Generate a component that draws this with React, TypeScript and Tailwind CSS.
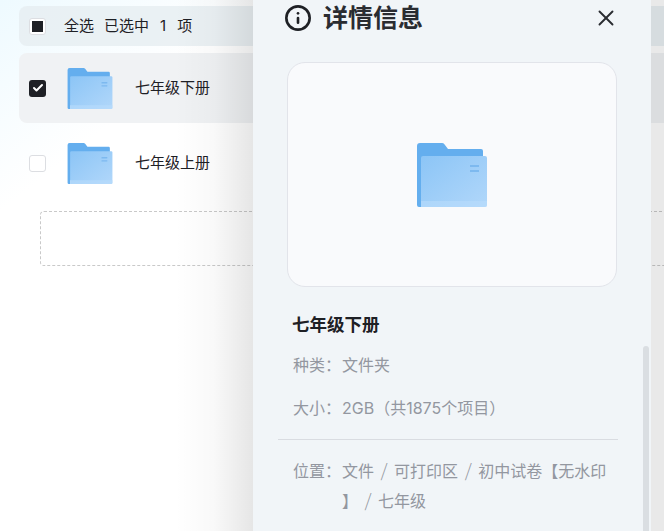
import { Check, Info, X } from 'lucide-react';

const cjk = "font-['Inter','Noto_Sans_CJK_SC',sans-serif]";

function FolderIcon({ className }: { className?: string }) {
  return (
    <svg viewBox="0 0 70 64" className={className}>
      <defs>
        <linearGradient id="folderFront" x1="0" y1="0" x2="1" y2="1">
          <stop offset="0" stopColor="#8cc5f6" />
          <stop offset="1" stopColor="#b1d7fa" />
        </linearGradient>
      </defs>
      <path d="M0 3a3 3 0 0 1 3-3h22a3 3 0 0 1 2.4 1.2L31 6h33a2 2 0 0 1 2 2v50H4v6H2a2 2 0 0 1-2-2z" fill="#64aeee" />
      <path d="M4 15a2 2 0 0 1 2-2h62a2 2 0 0 1 2 2v47a2 2 0 0 1-2 2H4z" fill="url(#folderFront)" />
      <path d="M4 58h66v4a2 2 0 0 1-2 2H4z" fill="#b9dcfb" opacity="0.6" />
      <path d="M53 22h9v2h-9zM53 27h9v2h-9z" fill="#7db9ef" />
    </svg>
  );
}

function FileRow({ name, selected }: { name: string; selected?: boolean }) {
  return (
    <div className={`flex h-[70px] items-center rounded-lg pl-[10px] ${selected ? 'bg-[#f0f2f4]' : ''}`}>
      {selected ? (
        <span className="flex h-[17px] w-[17px] items-center justify-center rounded-[3px] bg-[#1e2025]">
          <Check className="h-3 w-3 text-white" strokeWidth={4} />
        </span>
      ) : (
        <span className="h-[17px] w-[17px] rounded-[3px] border border-[#dcdee2] bg-white" />
      )}
      <FolderIcon className="ml-[21px] mt-px h-[41px] w-[46px]" />
      <span className="ml-[22px] text-[15px] text-[#1e2025]">{name}</span>
    </div>
  );
}

function MetaRow({ label, children }: { label: string; children: React.ReactNode }) {
  return (
    <div className="flex text-base leading-[30px] text-[#9397a0]">
      <span className="w-[49px] shrink-0">{label}</span>
      <span className="min-w-0 flex-1 whitespace-nowrap">{children}</span>
    </div>
  );
}

function Sep() {
  return <span className="mx-[6.5px] font-['Noto_Sans_CJK_SC',sans-serif] text-lg leading-none font-light">/</span>;
}

export default function App() {
  return (
    <div className={`relative h-[531px] w-[664px] overflow-hidden bg-gradient-to-br from-[#eefaff] via-white via-[20%] to-white ${cjk}`}>
      {/* file list behind the drawer */}
      <div className="-mr-10 flex flex-col pl-[19px]">
        <div className="mt-[6px] flex h-10 items-center rounded-lg bg-[#e6edf1]/80 pl-[10px] text-[15px] text-[#1e2025]">
          <span className="flex h-[17px] w-[17px] items-center justify-center rounded-[3px] border border-[#dcdee2] bg-white">
            <span className="h-[11px] w-[11px] bg-[#1e2025]" />
          </span>
          <span className="ml-[18px]">全选</span>
          <span className="ml-[10px]">已选中</span>
          <span className="ml-[11px]">1</span>
          <span className="ml-[11px]">项</span>
        </div>
        <div className="mt-[7px]">
          <FileRow name="七年级下册" selected />
        </div>
        <div className="mt-[5px]">
          <FileRow name="七年级上册" />
        </div>
        <div className="ml-[21px] mt-[13px] h-[55px] rounded border border-dashed border-[#c9c9c9]" />
      </div>

      {/* drawer shadow */}
      <div className="pointer-events-none absolute inset-y-0 left-[175px] w-[78px] bg-gradient-to-r from-transparent via-black/[.025] to-black/10" />
      <div className="pointer-events-none absolute inset-y-0 right-0 w-[13px] bg-black/[.085]" />

      {/* details drawer */}
      <aside className="absolute bottom-0 left-[253px] top-0 w-[398px] overflow-hidden bg-[#f1f5f8]">
        <div className="flex items-center justify-between pl-[31px] pr-[32px] pt-[3px]">
          <div className="flex items-center gap-[11px]">
            <Info className="h-7 w-7 text-[#1e2025]" strokeWidth={2.25} />
            <h2 className="text-[25px] leading-[30px] font-bold text-[#2a2c31]">详情信息</h2>
          </div>
          <X className="h-[26px] w-[26px] text-[#2a2c31]" strokeWidth={1.75} />
        </div>
        <div className="ml-[34px] mt-[29px] flex h-[225px] w-[330px] items-center justify-center rounded-[18px] border border-[#e2e4ea] bg-[#f9fafc]">
          <FolderIcon className="h-16 w-[70px]" />
        </div>
        <div className="pl-10 pr-[33px]">
          <h3 className="-ml-px mt-[26px] text-[17.5px] leading-6 font-bold text-[#1e2025]">七年级下册</h3>
          <div className="mt-[13px]">
            <MetaRow label="种类：">文件夹</MetaRow>
          </div>
          <div className="mt-[13px]">
            <MetaRow label="大小：">2GB（共1875个项目）</MetaRow>
          </div>
        </div>
        <div className="ml-[25px] mt-4 h-px w-[340px] bg-[#d9dce1]" />
        <div className="mt-4 pl-10 pr-[33px]">
          <MetaRow label="位置：">
            文件<Sep />可打印区<Sep />初中试卷【无水印
            <br />
            】<Sep />七年级
          </MetaRow>
        </div>
        <div className="absolute bottom-0 right-[2px] top-[346px] w-[6px] rounded-t-full bg-[#dadee2]" />
      </aside>
    </div>
  );
}
